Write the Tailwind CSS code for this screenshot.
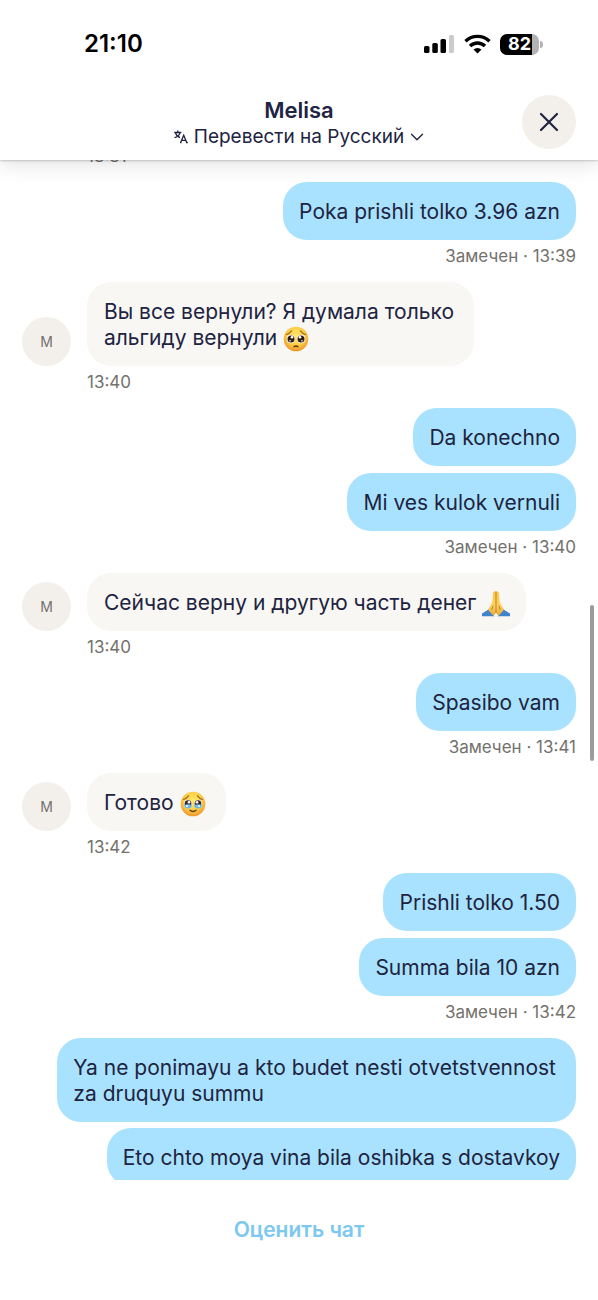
<!DOCTYPE html>
<html lang="ru">
<head>
<meta charset="utf-8">
<meta name="viewport" content="width=device-width, initial-scale=1">
<title>Melisa</title>
<script src="https://cdn.jsdelivr.net/npm/@tailwindcss/browser@4"></script>
</head>
<body class="flex h-screen flex-col overflow-hidden bg-white font-['Inter','Noto_Sans',sans-serif] text-[#202341]">

<svg class="absolute size-0" aria-hidden="true">
  <defs>
    <radialGradient id="face" cx="50%" cy="38%" r="60%">
      <stop offset="0" stop-color="#ffe96b"/><stop offset=".6" stop-color="#fdcf48"/><stop offset="1" stop-color="#ee9a2c"/>
    </radialGradient>
    <linearGradient id="hand" x1="0" y1="0" x2="0" y2="1">
      <stop offset="0" stop-color="#fbc743"/><stop offset=".6" stop-color="#fdd263"/><stop offset="1" stop-color="#e9a02d"/>
    </linearGradient>
  </defs>
</svg>

<div class="relative z-20 flex h-[84px] shrink-0 items-center justify-between bg-white pt-1 pr-[55px] pl-[84px] text-black">
  <time class="text-2xl font-semibold">21:10</time>
  <div class="flex items-center gap-[9px]">
    <svg class="h-5 w-[31px]" viewBox="0 0 31 20" aria-label="Сигнал">
      <rect x="0" y="12" width="5.500" height="7" rx="1.6"/>
      <rect x="8.300" y="9" width="5.500" height="10" rx="1.6"/>
      <rect x="16.500" y="5" width="5.500" height="14" rx="1.600"/>
      <rect x="25" y="1" width="5" height="18" rx="1.600" fill="#cbcbcb"/>
    </svg>
    <svg class="h-5 w-[27px]" viewBox="0 0 27 20" fill="none" stroke="#000" stroke-width="3.400" aria-label="Wi-Fi">
      <path d="M1.500 7.300a17.200 17.200 0 0 1 24 0M6 12a10.800 10.800 0 0 1 15 0"/>
      <path d="M13.500 19.500 9.500 15.500a5.800 5.800 0 0 1 8 0z" fill="#000" stroke="none"/>
    </svg>
    <div class="flex items-center gap-px">
      <div class="flex h-[21px] w-[39px] items-center justify-center rounded-[7px] bg-[linear-gradient(90deg,#000_82%,#b3b3b3_82%)] text-lg font-bold text-white">82</div>
      <div class="h-[7px] w-[3px] rounded-r-full bg-[#b3b3b3]"></div>
    </div>
  </div>
</div>

<header class="z-10 grid h-[76px] shrink-0 grid-cols-[54px_1fr_54px] items-center bg-white px-[22px] shadow-[0_1px_2px_rgba(0,0,0,0.2),0_4px_20px_rgba(0,0,0,0.12)]">
  <span></span>
  <div class="flex flex-col items-center pt-0.5">
    <h1 class="text-[22px] leading-7 font-semibold">Melisa</h1>
    <button type="button" class="flex items-center gap-1.5 text-[19px] leading-[26px]">
      <svg class="size-3.5" viewBox="0 0 14 14" fill="none" stroke="currentColor" stroke-width="1.300" aria-hidden="true">
        <path d="M.300 2.500h7M3.800 .600v1.900M1.500 2.800c.600 2.200 2.500 4 4.500 4.800M6 2.800C5.400 5 3 7 .500 7.700"/>
        <path d="m6.700 12.500 3-7.200 3 7.200M7.800 10.300h3.800M6 12.500h1.500M12 12.500h1.800"/>
      </svg>
      <span>Перевести на Русский</span>
      <svg class="h-2 w-3.5" viewBox="0 0 14 8" fill="none" stroke="currentColor" stroke-width="1.400" stroke-linecap="round" stroke-linejoin="round" aria-hidden="true"><path d="m1.500 1.300 5.500 5.500 5.500-5.500"/></svg>
    </button>
  </div>
  <button type="button" aria-label="Закрыть" class="flex size-[54px] items-center justify-center rounded-full bg-[#f3f0ec]">
    <svg class="size-5" viewBox="0 0 20 20" fill="none" stroke="currentColor" stroke-width="2.200" stroke-linecap="round" aria-hidden="true"><path d="m2 2 16 16M18 2 2 18"/></svg>
  </button>
</header>

<main class="relative min-h-0 flex-1 overflow-hidden">
  <div class="-mt-3.5 flex flex-col gap-4 px-[22px] text-[21px] leading-[26px]">
    <time class="ml-[65px] text-[17px] leading-5 text-[#73716d]">13:31</time>

    <section class="flex flex-col items-end gap-1.5">
      <p class="rounded-3xl bg-[#a9e2fe] px-4 pt-[17px] pb-[15px]">Poka prishli tolko 3.96 azn</p>
      <small class="text-[17px] leading-5 text-[#73716d]">Замечен · 13:39</small>
    </section>

    <section class="grid grid-cols-[49px_1fr] items-end gap-x-4 gap-y-1.5">
      <span class="flex size-[49px] items-center justify-center rounded-full bg-[#f3f0ec] text-sm text-[#73716d]">M</span>
      <p class="w-fit rounded-3xl bg-[#f9f7f4] pt-[17px] pr-5 pb-[15px] pl-[17px]">Вы все вернули? Я думала только<br>альгиду вернули
        <svg class="-my-1 inline size-[26px] align-middle" viewBox="0 0 26 26" role="img" aria-label="Умоляющее лицо">
          <circle cx="13" cy="13" r="12.300" fill="url(#face)"/>
          <g fill="none" stroke="#9a6220" stroke-width="1.100" stroke-linecap="round"><path d="M3.500 8.500Q6.500 7.500 8.500 4.800M22.500 8.500Q19.500 7.500 17.500 4.800"/><path d="M11 20.800q2-1.800 4 0" stroke="#63350f" stroke-width="1.400"/></g>
          <ellipse cx="7.800" cy="13" rx="4" ry="4.200" fill="#fff"/><ellipse cx="18.200" cy="13" rx="4" ry="4.200" fill="#fff"/>
          <circle cx="8" cy="12.900" r="3.500" fill="#2d1d19"/><circle cx="18" cy="12.900" r="3.500" fill="#2d1d19"/>
          <g fill="#fff"><circle cx="9" cy="11.300" r="1.300"/><circle cx="17" cy="11.300" r="1.300"/><circle cx="7" cy="14.800" r=".800"/><circle cx="19" cy="14.800" r=".800"/></g>
        </svg></p>
      <time class="col-start-2 text-[17px] leading-5 text-[#73716d]">13:40</time>
    </section>

    <section class="flex flex-col items-end gap-1.5">
      <div class="flex flex-col items-end gap-[7px]">
        <p class="rounded-3xl bg-[#a9e2fe] px-4 pt-[17px] pb-[15px]">Da konechno</p>
        <p class="rounded-3xl bg-[#a9e2fe] px-4 pt-[17px] pb-[15px]">Mi ves kulok vernuli</p>
      </div>
      <small class="text-[17px] leading-5 text-[#73716d]">Замечен · 13:40</small>
    </section>

    <section class="grid grid-cols-[49px_1fr] items-end gap-x-4 gap-y-1.5">
      <span class="flex size-[49px] items-center justify-center rounded-full bg-[#f3f0ec] text-sm text-[#73716d]">M</span>
      <p class="w-fit rounded-3xl bg-[#f9f7f4] pt-[17px] pr-4 pb-[15px] pl-[17px]">Сейчас верну и другую часть денег
        <svg class="-my-1 inline h-[26px] w-7 align-middle" viewBox="0 0 28 26" role="img" aria-label="Сложенные ладони">
          <path d="M0 22.500 6.500 18.500l6 6.700H0zM28 22.500l-6.500-4-6 6.700H28z" fill="#3f83ce"/>
          <path d="M13.800 .300c-1.800-.300-2.700.900-2.800 2.600L10.300 11 6 18.800l5.500 6.300 2.500-3.500 2.500 3.500 5.500-6.300-4.300-7.800L17 2.900C16.900 1.200 15.600 0 13.800.300z" fill="url(#hand)"/>
          <path d="M14 1v20.500M11 15l-1.200 3.500M17 15l1.200 3.500" fill="none" stroke="#b87624" stroke-width=".900" stroke-linecap="round"/>
        </svg></p>
      <time class="col-start-2 text-[17px] leading-5 text-[#73716d]">13:40</time>
    </section>

    <section class="flex flex-col items-end gap-1.5">
      <p class="rounded-3xl bg-[#a9e2fe] px-4 pt-[17px] pb-[15px]">Spasibo vam</p>
      <small class="text-[17px] leading-5 text-[#73716d]">Замечен · 13:41</small>
    </section>

    <section class="grid grid-cols-[49px_1fr] items-end gap-x-4 gap-y-1.5">
      <span class="flex size-[49px] items-center justify-center rounded-full bg-[#f3f0ec] text-sm text-[#73716d]">M</span>
      <p class="w-fit rounded-3xl bg-[#f9f7f4] pt-[17px] pr-5 pb-[15px] pl-[17px]">Готово
        <svg class="-my-1 inline size-[26px] align-middle" viewBox="0 0 26 26" role="img" aria-label="Лицо, сдерживающее слёзы">
          <circle cx="13" cy="13" r="12.300" fill="url(#face)"/>
          <g fill="none" stroke="#9a6220" stroke-width="1.100" stroke-linecap="round"><path d="M3.500 8.500Q6.500 7.500 8.500 4.800M22.500 8.500Q19.500 7.500 17.500 4.800"/><path d="M10 19.300q3 2.600 6 0" stroke="#63350f" stroke-width="1.400"/></g>
          <ellipse cx="7.800" cy="13" rx="4" ry="4.200" fill="#fff"/><ellipse cx="18.200" cy="13" rx="4" ry="4.200" fill="#fff"/>
          <circle cx="8" cy="12.700" r="3.400" fill="#3b2a25"/><circle cx="18" cy="12.700" r="3.400" fill="#3b2a25"/>
          <path d="M4 14q4-1.500 8 0-.500 3.500-4 3.500T4 14zM14 14q4-1.500 8 0-.500 3.500-4 3.500T14 14z" fill="#6fb6e2"/>
          <g fill="#fff"><circle cx="9" cy="11.300" r="1.300"/><circle cx="17" cy="11.300" r="1.300"/><circle cx="7" cy="15" r="1"/><circle cx="19" cy="15" r="1"/></g>
        </svg></p>
      <time class="col-start-2 text-[17px] leading-5 text-[#73716d]">13:42</time>
    </section>

    <section class="flex flex-col items-end gap-1.5">
      <div class="flex flex-col items-end gap-[7px]">
        <p class="rounded-3xl bg-[#a9e2fe] px-4 pt-[17px] pb-[15px]">Prishli tolko 1.50</p>
        <p class="rounded-3xl bg-[#a9e2fe] px-4 pt-[17px] pb-[15px]">Summa bila 10 azn</p>
      </div>
      <small class="text-[17px] leading-5 text-[#73716d]">Замечен · 13:42</small>
    </section>

    <section class="flex flex-col items-end gap-1.5">
      <p class="rounded-3xl bg-[#a9e2fe] pt-[17px] pr-5 pb-[15px] pl-4">Ya ne ponimayu a kto budet nesti otvetstvennost<br>za druquyu summu</p>
      <p class="rounded-3xl bg-[#a9e2fe] px-4 pt-[17px] pb-[15px]">Eto chto moya vina bila oshibka s dostavkoy</p>
    </section>
  </div>
  <div class="absolute top-[445px] right-1 h-[156px] w-1 rounded-full bg-[#9c9c9c]"></div>
</main>

<footer class="flex h-[120px] shrink-0 items-start justify-center pt-9">
  <button type="button" class="text-[21px] leading-7 font-semibold text-[#7cc8ee]">Оценить чат</button>
</footer>
</body>
</html>
